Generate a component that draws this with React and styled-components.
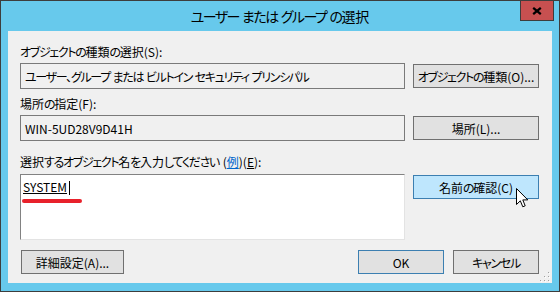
import React from 'react';
import styled, { createGlobalStyle, css } from 'styled-components';

// Windows 8 "select users or groups" dialog

const GlobalStyle = createGlobalStyle`
  html, body {
    margin: 0;
    padding: 0;
    background: #ffffff;
  }
  body {
    font-family: "Noto Sans CJK JP", "Noto Sans", sans-serif;
    font-feature-settings: "palt";
    color: #000000;
  }
`

// Meiryo UI draws kana a bit narrower than kanji; tighten kana runs to match
const Kana = styled.span`
  letter-spacing: -0.11em;
`

const JpText = styled.span`
  white-space: pre;
`

const KANA_RUN = /([\u3040-\u30ff\u3001\u3002]+)/

const Jp = ({ text }) => (
  <JpText>
    {text.split(KANA_RUN).map((part, i) =>
      i % 2 === 1 ? <Kana key={i}>{part}</Kana> : part
    )}
  </JpText>
)

const Window = styled.div`
  width: 560px;
  height: 292px;
  box-sizing: border-box;
  border: 1px solid #3d3d3d;
  background: #67c9ec;
  display: flex;
  flex-direction: column;
`

const TitleBar = styled.div`
  height: 30px;
  flex: none;
  display: grid;
  grid-template-columns: 1fr auto 1fr;
  align-items: start;
`

const Title = styled.div`
  grid-column: 2;
  font-size: 14px;
  line-height: 31px;
  white-space: pre;
`

const CloseButton = styled.div`
  grid-column: 3;
  justify-self: end;
  margin-right: 5px;
  width: 34px;
  height: 20px;
  box-sizing: border-box;
  background: #c75050;
  border: 1px solid #3d3d3d;
  border-top: none;
  display: flex;
  align-items: center;
  justify-content: center;
`

const Client = styled.div`
  position: relative;
  flex: 1;
  margin: 0 7px 8px 7px;
  background: #f0f0f0;
  padding: 13px 13px 0 12px;
  box-sizing: border-box;
`

const Section = styled.div`
  margin-top: ${p => p.$top || 0}px;
`

const Label = styled.div`
  font-size: 12px;
  line-height: 16px;
  height: 16px;
  margin-bottom: ${p => p.$gap || 3}px;
  white-space: pre;
  word-spacing: 1px;
`

const Link = styled.span`
  color: #0066cc;
  text-decoration: underline;
`

const Key = styled.span`
  text-decoration: underline;
`

const FieldRow = styled.div`
  display: grid;
  grid-template-columns: 385px 126px;
  column-gap: 8px;
  align-items: ${p => p.$align || 'center'};
`

const ReadOnlyBox = styled.div`
  height: 26px;
  box-sizing: border-box;
  border: 1px solid #7a7a7a;
  padding: 0 4px;
  display: flex;
  align-items: center;
  font-size: 12px;
  white-space: pre;
  overflow: hidden;
`

const NameBox = styled.div`
  position: relative;
  height: 66px;
  box-sizing: border-box;
  background: #ffffff;
  border: 1px solid;
  border-color: #828282 #e3e3e3 #e3e3e3 #828282;
  padding: 4px 2px 0;
  font-size: 12px;
  line-height: 16px;
`

const ResolvedName = styled.span`
  text-decoration: underline;
`

const Caret = styled.span`
  display: inline-block;
  width: 1px;
  height: 14px;
  margin-left: 2px;
  background: #000000;
  vertical-align: -3px;
`

const RedMark = styled.div`
  position: absolute;
  left: 1px;
  top: 24px;
  width: 60px;
  height: 4px;
  border-radius: 2px;
  background: #e8212b;
`

const Button = styled.div`
  position: relative;
  height: 24px;
  width: ${p => (p.$width ? `${p.$width}px` : 'auto')};
  box-sizing: border-box;
  border: 1px solid #707070;
  background: #e1e1e1;
  display: flex;
  align-items: center;
  justify-content: center;
  font-size: 12px;
  white-space: pre;
  ${p => p.$hover && css`
    background: #bee6fd;
    border-color: #3c7fb1;
  `}
  ${p => p.$default && css`
    border-color: #3c7fb1;
  `}
`

const CheckButton = styled(Button)`
  margin-top: 1px;
`

const Cursor = styled.svg`
  position: absolute;
  left: 102px;
  top: 12px;
`

const BottomRow = styled.div`
  display: flex;
  align-items: center;
  margin-top: 10px;
  padding-left: 1px;
`

const Spacer = styled.div`
  flex: 1;
`

const ButtonGroup = styled.div`
  display: flex;
  gap: 9px;
`

const Grip = styled.svg`
  position: absolute;
  right: 2px;
  bottom: 1px;
`

const CloseGlyph = () => (
  <svg width="10" height="8" viewBox="0 0 10 8">
    <path d="M1.2 0.8 L8.8 7.2 M8.8 0.8 L1.2 7.2" stroke="#000" strokeWidth="2.2" />
  </svg>
)

const Arrow = () => (
  <Cursor width="13" height="21" viewBox="0 0 13 21">
    <path
      d="M0.5 0.5 L0.5 16.5 L4.3 12.8 L6.8 18.8 L9.2 17.8 L6.8 11.9 L11.8 11.9 Z"
      fill="#ffffff"
      stroke="#000000"
      strokeWidth="1"
      strokeLinejoin="miter"
    />
  </Cursor>
)

const gripDots = [[8, 0], [8, 4], [4, 4], [8, 8], [4, 8], [0, 8]]

const ResizeGrip = () => (
  <Grip width="10" height="10" viewBox="0 0 10 10">
    {gripDots.map(([x, y]) => (
      <g key={`${x}-${y}`}>
        <rect x={x + 1} y={y + 1} width="1" height="1" fill="#ffffff" />
        <rect x={x} y={y} width="1" height="1" fill="#a0a0a0" />
      </g>
    ))}
  </Grip>
)

export default function App() {
  return (
    <>
      <GlobalStyle />
      <Window>
        <TitleBar>
          <Title><Jp text="ユーザー または グループ の選択" /></Title>
          <CloseButton>
            <CloseGlyph />
          </CloseButton>
        </TitleBar>
        <Client>
          <Section>
            <Label><Jp text="オブジェクトの種類の選択(S):" /></Label>
            <FieldRow>
              <ReadOnlyBox>
                <Jp text="ユーザー、グループ または ビルトイン セキュリティ プリンシパル" />
              </ReadOnlyBox>
              <Button><Jp text="オブジェクトの種類(O)..." /></Button>
            </FieldRow>
          </Section>
          <Section $top={7}>
            <Label><Jp text="場所の指定(F):" /></Label>
            <FieldRow>
              <ReadOnlyBox>WIN-5UD28V9D41H</ReadOnlyBox>
              <Button>場所(L)...</Button>
            </FieldRow>
          </Section>
          <Section $top={13}>
            <Label $gap={4}>
              <Jp text="選択するオブジェクト名を入力してください " />(<Link>例</Link>)(<Key>E</Key>):
            </Label>
            <FieldRow $align="start">
              <NameBox>
                <ResolvedName>SYSTEM</ResolvedName>
                <Caret />
                <RedMark />
              </NameBox>
              <CheckButton $hover>
                <Jp text="名前の確認(C)" />
                <Arrow />
              </CheckButton>
            </FieldRow>
          </Section>
          <BottomRow>
            <Button $width={103}>詳細設定(A)...</Button>
            <Spacer />
            <ButtonGroup>
              <Button $width={86} $default>OK</Button>
              <Button $width={86}><Jp text="キャンセル" /></Button>
            </ButtonGroup>
          </BottomRow>
          <ResizeGrip />
        </Client>
      </Window>
    </>
  );
}
